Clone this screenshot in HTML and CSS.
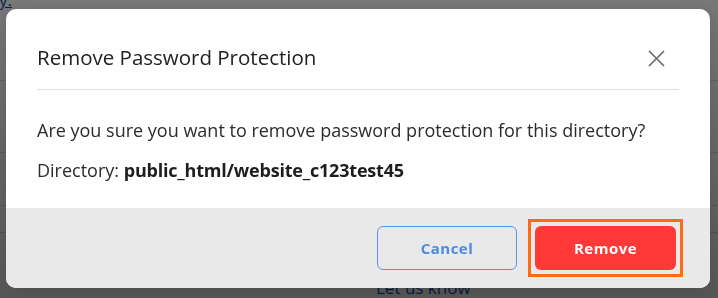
FILE: index.html
```html
<!DOCTYPE html>
<html>
<head>
<meta charset="utf-8">
<link rel="stylesheet" href="styles.css">
</head>
<body>
<div class="page">
  <p class="link-top"><a href="#">y.</a></p>
  <div class="row r1"></div>
  <div class="row r2"></div>
  <div class="row r3"></div>
  <div class="row r4"></div>
  <p class="link-bottom"><a href="#">Let us know</a></p>
</div>
<div class="overlay">
  <div class="modal">
    <div class="modal-header">
      <h2 class="title">Remove Password Protection</h2>
      <button class="close" aria-label="Close">
        <svg width="17" height="17" viewBox="0 0 17 17"><path d="M1 1L16 16M16 1L1 16" stroke="#6b6b6b" stroke-width="1.7" fill="none"/></svg>
      </button>
    </div>
    <div class="modal-body">
      <p class="line">Are you sure you want to remove password protection for this directory?</p>
      <p class="line dir">Directory: <strong>public_html/website_c123test45</strong></p>
    </div>
    <div class="modal-footer">
      <button class="btn btn-cancel">Cancel</button>
      <span class="focus-ring"><button class="btn btn-remove">Remove</button></span>
    </div>
  </div>
</div>
</body>
</html>
```
FILE: styles.css
```css
* { box-sizing: border-box; }
html, body { margin: 0; padding: 0; }
body {
  width: 718px;
  height: 298px;
  overflow: hidden;
  font-family: "Open Sans", "Noto Sans", sans-serif;
  background: #fff;
}
.page {
  height: 298px;
  display: flex;
  flex-direction: column;
}
.link-top {
  margin: -11px 0 0 -1px;
  font-size: 17px;
  line-height: 22px;
  height: 22px;
}
.link-top a, .link-bottom a { color: #1f4fa8; text-decoration: underline; }
.link-bottom a { text-decoration: none; }
.row { border-bottom: 1px solid #ddd; }
.r1 { height: 70px; }
.r2 { height: 72px; }
.r3 { height: 53px; }
.r4 { height: 27px; }
.link-bottom {
  margin: 45px 0 0 376px;
  font-size: 17px;
  line-height: 20px;
}
.overlay {
  position: fixed;
  inset: 0;
  background: linear-gradient(to bottom, rgba(0,0,0,0.53), rgba(0,0,0,0.66));
  padding: 9px 8px 0 6px;
}
.modal {
  width: 704px;
  height: 279px;
  background: #fff;
  border-radius: 10px;
  overflow: hidden;
  display: flex;
  flex-direction: column;
  box-shadow: 0 4px 20px rgba(0,0,0,0.15);
}
.modal-header {
  margin: 0 31px;
  height: 81px;
  padding-top: 34px;
  border-bottom: 1px solid #dedede;
  display: flex;
  align-items: flex-start;
  justify-content: space-between;
}
.title {
  margin: 0;
  font-size: 20.5px;
  font-weight: 500;
  line-height: 28px;
  color: #222;
}
.close {
  border: 0;
  background: none;
  padding: 0;
  margin: 7px 14px 0 0;
  width: 17px;
  height: 17px;
  display: flex;
}
.modal-body {
  height: 118px;
  padding: 27px 31px 0;
}
.line {
  margin: 0;
  font-size: 18px;
  line-height: 26px;
  color: #2b2b2b;
}
.dir { margin-top: 14px; }
.dir strong { font-weight: 700; color: #1e1e1e; letter-spacing: -0.2px; }
.modal-footer {
  flex: 1;
  background: #e9e9e9;
  display: flex;
  justify-content: flex-end;
  align-items: center;
  padding: 0 27px 0 0;
  gap: 11px;
}
.btn {
  height: 44px;
  font-family: "Open Sans", "Noto Sans", sans-serif;
  font-size: 15px;
  font-weight: 700;
  letter-spacing: 0.5px;
  border-radius: 6px;
  cursor: pointer;
  display: block;
}
.btn-cancel {
  width: 140px;
  background: transparent;
  border: 1px solid #5b95e6;
  color: #4a8ae0;
}
.focus-ring {
  display: block;
  border: 3px solid #ff6a13;
  padding: 4px;
}
.btn-remove {
  width: 141px;
  background: #ff3838;
  border: 0;
  color: #fff;
}
```
